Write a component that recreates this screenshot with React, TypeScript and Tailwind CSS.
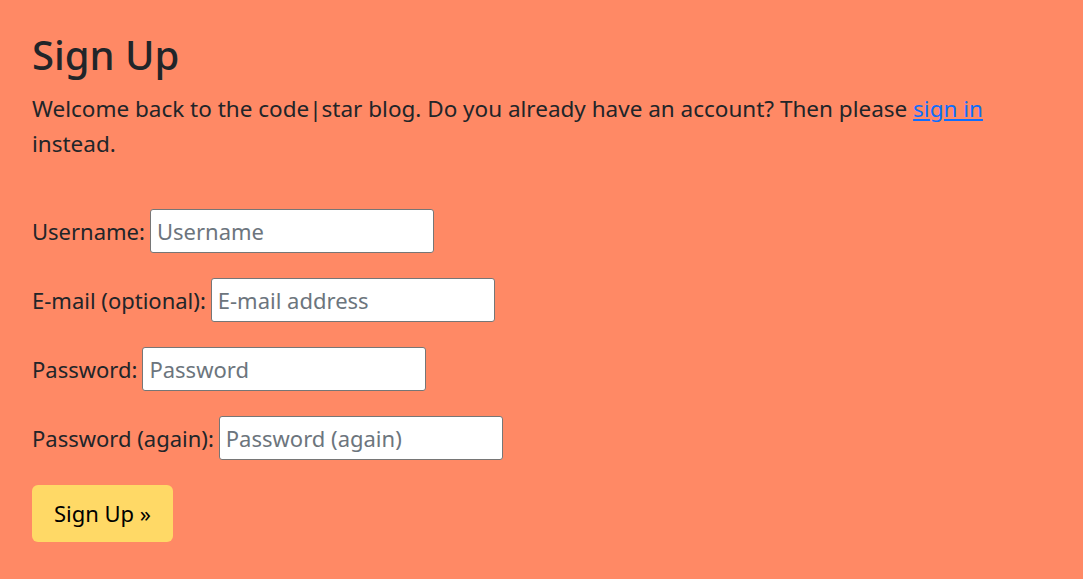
const fields = [
  { label: "Username:", placeholder: "Username", type: "text" },
  { label: "E-mail (optional):", placeholder: "E-mail address", type: "email" },
  { label: "Password:", placeholder: "Password", type: "password" },
  { label: "Password (again):", placeholder: "Password (again)", type: "password" },
];

const App = () => {
  return (
    <div className="min-h-screen bg-[#ff8965] px-[32px] pt-[31px] text-[#212529] font-['Noto_Sans',sans-serif]">
      <h1 className="text-[40px] font-medium leading-[1.2] mb-[12px]">Sign Up</h1>
      <p className="text-[22.5px] leading-[35px] mb-[48px]">
        Welcome back to the code|star blog. Do you already have an account? Then please{" "}
        <a href="#" className="text-[#0d6efd] underline">sign in</a> instead.
      </p>

      <form className="flex flex-col">
        {fields.map((f) => (
          <p key={f.label} className="flex items-center gap-[5px] mb-[25px] text-[22px]">
            <label>{f.label}</label>
            <input
              type={f.type === "password" ? "password" : "text"}
              placeholder={f.placeholder}
              className="w-[284px] h-[44px] bg-white border border-[#767676] rounded-[3px] px-[6px] text-[22px] placeholder:text-[#6c757d] outline-none"
            />
          </p>
        ))}
        <div>
          <button
            type="submit"
            className="w-[141px] h-[57px] bg-[#ffd966] rounded-[6px] text-[22px] text-black"
          >
            Sign Up »
          </button>
        </div>
      </form>
    </div>
  );
};

export default App;
